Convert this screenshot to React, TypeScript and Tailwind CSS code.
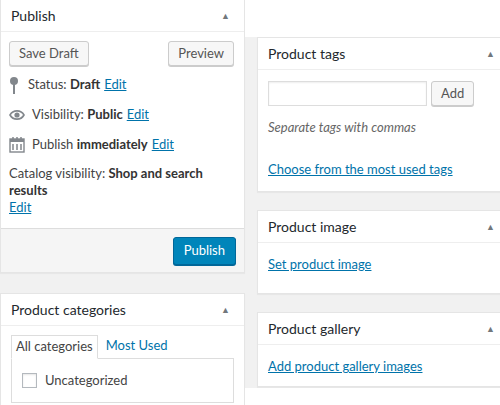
import React from 'react';

const Arrow = () => <span className="text-[9px] text-[#72777c]">▲</span>;

const Box = ({ title, children, className = '' }: { title: string; children: React.ReactNode; className?: string }) => (
  <div className={`bg-white border border-[#e5e5e5] shadow-[0_1px_1px_rgba(0,0,0,0.04)] ${className}`}>
    <div className="h-[32px] flex items-center justify-between px-[10px] pr-[14px] border-b border-[#eee] text-[14px] text-[#23282d]">
      <span>{title}</span>
      <Arrow />
    </div>
    {children}
  </div>
);

const Btn = ({ children, className = '' }: { children: React.ReactNode; className?: string }) => (
  <button className={`h-[25px] px-[9px] text-[13px] text-[#555] bg-[#f7f7f7] border border-[#ccc] rounded-[3px] shadow-[0_1px_0_#ccc] ${className}`}>{children}</button>
);

const Edit = () => <a className="text-[#0073aa] underline ml-1">Edit</a>;

export default function App() {
  return (
    <div className="w-[500px] h-[405px] overflow-hidden bg-[#f1f1f1] flex gap-[12px] text-[13px] text-[#444]" style={{ fontFamily: 'Lato, "Noto Sans", sans-serif' }}>
      <div className="w-[245px] shrink-0 flex flex-col gap-[20px]">
        <Box title="Publish" className="border-t-0">
          <div className="px-[8px] pt-[9px] pb-[12px]">
            <div className="flex justify-between">
              <Btn>Save Draft</Btn>
              <Btn className="mr-[2px]">Preview</Btn>
            </div>
            <div className="flex items-center gap-[9px] mt-[9px] h-[20px]">
              <svg width="10" height="18" viewBox="0 0 10 18"><circle cx="5" cy="5" r="4" fill="#82878c" /><rect x="4" y="8" width="2" height="10" fill="#82878c" /></svg>
              <span>Status: <b className="font-bold text-[#333]">Draft</b><Edit /></span>
            </div>
            <div className="flex items-center gap-[7px] mt-[10px] h-[20px]">
              <svg width="16" height="12" viewBox="0 0 16 12"><path d="M1 6 C4 0.5 12 0.5 15 6 C12 11.5 4 11.5 1 6Z" fill="none" stroke="#82878c" strokeWidth="1.6" /><circle cx="8" cy="6" r="2.6" fill="#82878c" /></svg>
              <span>Visibility: <b className="font-bold text-[#333]">Public</b><Edit /></span>
            </div>
            <div className="flex items-center gap-[7px] mt-[10px] h-[20px]">
              <svg width="16" height="16" viewBox="0 0 16 16"><rect x="1" y="2" width="14" height="13" fill="none" stroke="#82878c" strokeWidth="1.4" /><rect x="1" y="2" width="14" height="3" fill="#82878c" /><path d="M4 0v4M8 0v4M12 0v4M4 7v6M8 7v6M12 7v6" stroke="#82878c" strokeWidth="1.5" /></svg>
              <span>Publish <b className="font-bold text-[#333]">immediately</b><Edit /></span>
            </div>
            <div className="mt-[10px] leading-[17px]">
              Catalog visibility: <b className="font-bold text-[#333]">Shop and search results</b>
              <br /><a className="text-[#0073aa] underline">Edit</a>
            </div>
          </div>
          <div className="bg-[#f5f5f5] border-t border-[#ddd] h-[44px] flex items-center justify-end px-[8px]">
            <button className="h-[28px] px-[10px] text-[13px] text-white bg-[#0085ba] border border-[#006799] rounded-[3px] shadow-[0_1px_0_#006799]">Publish</button>
          </div>
        </Box>
        <Box title="Product categories" className="flex-1">
          <div className="px-[10px] pt-[8px]">
            <div className="flex items-end">
              <div className="border border-[#ddd] border-b-white bg-white px-[4px] h-[24px] flex items-center -mb-px relative z-10">All categories</div>
              <div className="px-[8px] h-[24px] flex items-center text-[#0073aa]">Most Used</div>
            </div>
            <div className="border border-[#ddd] h-[45px] flex items-center px-[10px] gap-[8px]">
              <span className="w-[15px] h-[15px] border border-[#b4b9be] bg-white shadow-[inset_0_1px_2px_rgba(0,0,0,0.1)]" />
              <span>Uncategorized</span>
            </div>
            <a className="block mt-[9px] text-[#0073aa] underline">+ Add new category</a>
          </div>
        </Box>
      </div>
      <div className="flex-1 flex flex-col">
        <div className="h-[37px] bg-white -ml-[12px]" />
        <Box title="Product tags" className="mr-[-10px]">
          <div className="px-[10px] pt-[11px] pb-[12px]">
            <div className="flex gap-[4px]">
              <input className="w-[159px] h-[25px] border border-[#ddd] shadow-[inset_0_1px_2px_rgba(0,0,0,0.07)]" />
              <Btn className="h-[25px]">Add</Btn>
            </div>
            <div className="italic text-[#666] mt-[12px]">Separate tags with commas</div>
            <a className="block mt-[22px] text-[#0073aa] underline">Choose from the most used tags</a>
          </div>
        </Box>
        <Box title="Product image" className="mr-[-10px] mt-[18px]">
          <div className="px-[10px] pt-[12px] h-[50px]">
            <a className="text-[#0073aa] underline">Set product image</a>
          </div>
        </Box>
        <Box title="Product gallery" className="mr-[-10px] mt-[18px]">
          <div className="px-[10px] pt-[12px] h-[41px]">
            <a className="text-[#0073aa] underline">Add product gallery images</a>
          </div>
        </Box>
        <div className="flex-1 bg-white -ml-[12px] mt-[1px]" />
      </div>
    </div>
  );
}
